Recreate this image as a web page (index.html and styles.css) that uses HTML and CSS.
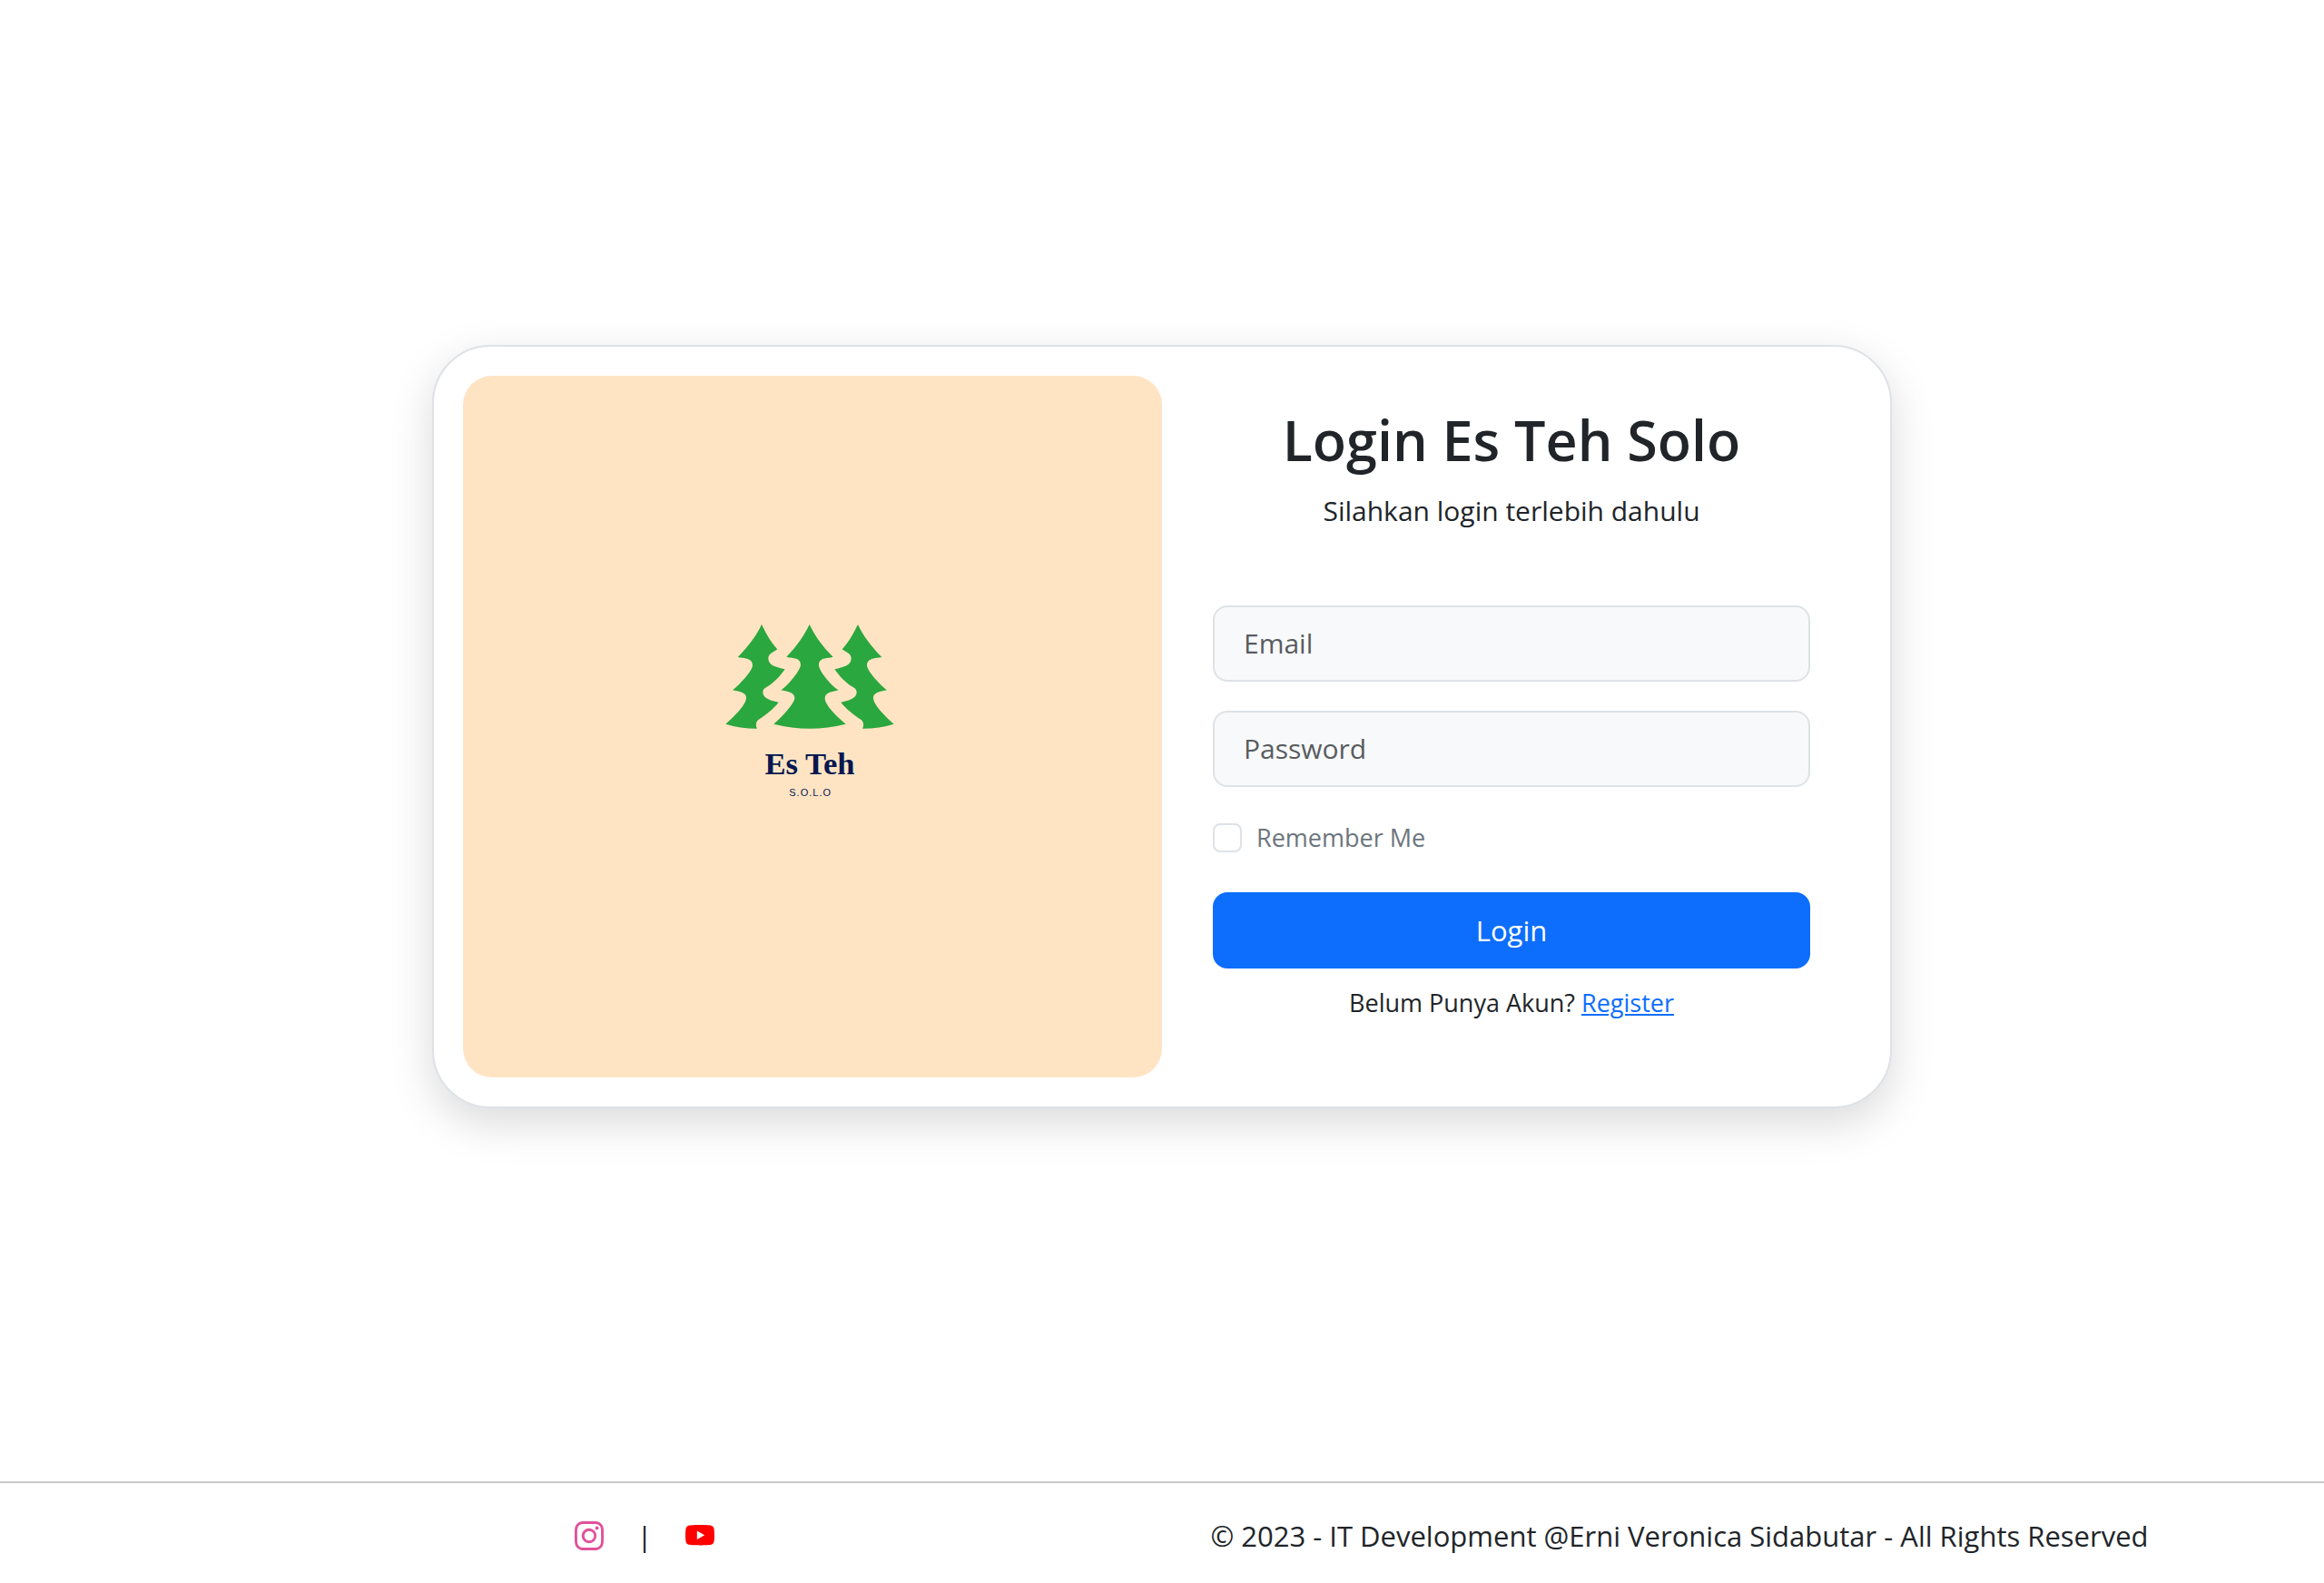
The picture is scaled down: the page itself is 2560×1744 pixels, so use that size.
FILE: index.html
```html
<!DOCTYPE html>
<html lang="id">
<head>
  <meta charset="utf-8">
  <meta name="viewport" content="width=device-width, initial-scale=1">
  <title>Login Es Teh Solo</title>
  <link rel="stylesheet" href="styles.css">
</head>
<body>
  <main class="page">
    <section class="card">
      <div class="brand">
        <svg class="logo" viewBox="0 0 690 660" role="img" aria-label="Es Teh Solo">
          <defs>
            <path id="side-tree" d="M177 54C190 80 205 110 229 136C215 147 200 148 199 166C199 190 225 195 254 202C240 222 220 245 198 258C187 264 181 268 181 279C183 300 210 306 233 311C215 335 190 352 165 370C157 378 157 390 162 398Q105 398 58 383C90 355 126 318 126 297C126 278 105 276 81 271C112 245 147 205 147 188C147 165 120 166 98 162C135 125 160 90 177 54Z"/>
          </defs>
          <g class="logo-trees">
            <use href="#side-tree"/>
            <path d="M335 54C350 85 375 125 413 161C400 167 366 160 366 188C366 205 400 250 431 271C405 278 386 278 386 300C388 320 420 355 455 383Q335 413 217 383C250 355 284 315 286 298C286 278 265 276 241 271C270 250 304 205 306 188C306 160 275 167 259 161C295 125 320 85 335 54Z"/>
            <use href="#side-tree" transform="translate(672 0) scale(-1 1)"/>
          </g>
          <text class="logo-name" x="336" y="548">Es Teh</text>
          <text class="logo-sub" x="338" y="620">S.O.L.O</text>
        </svg>
      </div>
      <div class="panel">
        <header class="heading">
          <h1 class="title">Login Es Teh Solo</h1>
          <p class="subtitle">Silahkan login terlebih dahulu</p>
        </header>
        <form class="form">
          <input class="field" type="email" placeholder="Email" aria-label="Email">
          <input class="field" type="password" placeholder="Password" aria-label="Password">
          <div class="remember">
            <input class="check" type="checkbox" id="remember">
            <label for="remember">Remember Me</label>
          </div>
          <button class="submit" type="submit">Login</button>
        </form>
        <p class="signup">Belum Punya Akun? <a href="#">Register</a></p>
      </div>
    </section>
  </main>
  <footer class="footer">
    <div class="footer-row">
      <div class="social">
        <a class="instagram" href="#" aria-label="Instagram">
          <svg viewBox="0 0 16 16"><path d="M8 0C5.829 0 5.556.01 4.703.048 3.85.088 3.269.222 2.76.42a3.917 3.917 0 0 0-1.417.923A3.927 3.927 0 0 0 .42 2.76C.222 3.268.087 3.85.048 4.7.01 5.555 0 5.827 0 8.001c0 2.172.01 2.444.048 3.297.04.852.174 1.433.372 1.942.205.526.478.972.923 1.417.444.445.89.719 1.416.923.51.198 1.09.333 1.942.372C5.555 15.99 5.827 16 8 16s2.444-.01 3.298-.048c.851-.04 1.434-.174 1.943-.372a3.916 3.916 0 0 0 1.416-.923c.445-.445.718-.891.923-1.417.197-.509.332-1.09.372-1.942C15.99 10.445 16 10.173 16 8s-.01-2.445-.048-3.299c-.04-.851-.175-1.433-.372-1.941a3.926 3.926 0 0 0-.923-1.417A3.911 3.911 0 0 0 13.24.42c-.51-.198-1.092-.333-1.943-.372C10.443.01 10.172 0 7.998 0h.003zm-.717 1.442h.718c2.136 0 2.389.007 3.232.046.78.035 1.204.166 1.486.275.373.145.64.319.92.599.28.28.453.546.598.92.11.281.24.705.275 1.485.039.843.047 1.096.047 3.231s-.008 2.389-.047 3.232c-.035.78-.166 1.203-.275 1.485a2.47 2.47 0 0 1-.599.919c-.28.28-.546.453-.92.598-.28.11-.704.24-1.485.276-.843.038-1.096.047-3.232.047s-2.39-.009-3.233-.047c-.78-.036-1.203-.166-1.485-.276a2.478 2.478 0 0 1-.92-.598 2.48 2.48 0 0 1-.6-.92c-.109-.281-.24-.705-.275-1.485-.038-.843-.046-1.096-.046-3.233 0-2.136.008-2.388.046-3.231.036-.78.166-1.204.276-1.486.145-.373.319-.64.599-.92.28-.28.546-.453.92-.598.282-.11.705-.24 1.485-.276.738-.034 1.024-.044 2.515-.045v.002zm4.988 1.328a.96.96 0 1 0 0 1.92.96.96 0 0 0 0-1.92zm-4.27 1.122a4.109 4.109 0 1 0 0 8.217 4.109 4.109 0 0 0 0-8.217zm0 1.441a2.667 2.667 0 1 1 0 5.334 2.667 2.667 0 0 1 0-5.334z"/></svg>
        </a>
        <span>|</span>
        <a class="youtube" href="#" aria-label="YouTube">
          <svg viewBox="0 0 16 16"><path d="M8.051 1.999h.089c.822.003 4.987.033 6.11.335a2.01 2.01 0 0 1 1.415 1.42c.101.38.172.883.22 1.402l.01.104.022.26.008.104c.065.914.073 1.77.074 1.957v.075c-.001.194-.01 1.108-.082 2.06l-.008.105-.009.104c-.05.572-.124 1.14-.235 1.558a2.007 2.007 0 0 1-1.415 1.42c-1.16.312-5.569.334-6.18.335h-.142c-.309 0-1.587-.006-2.927-.052l-.17-.006-.087-.004-.171-.007-.171-.007c-1.11-.049-2.167-.128-2.654-.26a2.007 2.007 0 0 1-1.415-1.419c-.111-.417-.185-.986-.235-1.558L.09 9.82l-.008-.104A31.4 31.4 0 0 1 0 7.68v-.123c.002-.215.01-.958.064-1.778l.007-.103.003-.052.008-.104.022-.26.01-.104c.048-.519.119-1.023.22-1.402a2.007 2.007 0 0 1 1.415-1.42c.487-.13 1.544-.21 2.654-.26l.17-.007.172-.006.086-.003.171-.007A99.788 99.788 0 0 1 7.858 2h.193zM6.4 5.209v4.818l4.157-2.408L6.4 5.209z"/></svg>
        </a>
      </div>
      <p class="copyright">© 2023 - IT Development @Erni Veronica Sidabutar - All Rights Reserved</p>
    </div>
  </footer>
</body>
</html>
```
FILE: styles.css
```css
* {
  box-sizing: border-box;
}

body {
  display: flex;
  flex-direction: column;
  min-height: 100vh;
  margin: 0;
  background: #fff;
  color: #212529;
  font: 400 31px/48px "Segoe UI", "Open Sans", "Noto Sans", sans-serif;
}

h1,
p {
  margin: 0;
}

a {
  color: #0d6efd;
}

.page {
  display: flex;
  flex: 1;
  align-items: center;
  justify-content: center;
  padding: 32px 32px 64px;
}

.card {
  display: grid;
  grid-template-columns: 1fr 1fr;
  width: 100%;
  max-width: 1608px;
  padding: 32px;
  border: 2px solid #dee2e6;
  border-radius: 64px;
  background: #fff;
  box-shadow: 0 16px 48px rgba(0, 0, 0, 0.15);
}

.brand {
  display: flex;
  align-items: center;
  justify-content: center;
  padding-bottom: 40px;
  border-radius: 32px;
  background: #ffe4c4;
}

.logo {
  width: 230px;
  height: 220px;
}

.logo-trees {
  fill: #2aa73e;
}

.logo-name,
.logo-sub {
  fill: #06184f;
  text-anchor: middle;
}

.logo-name {
  font: 700 104px "Liberation Serif", serif;
}

.logo-sub {
  font: 400 33px "Liberation Sans", sans-serif;
  letter-spacing: 3px;
}

.panel {
  padding: 32px 56px 60px;
}

.heading {
  margin-bottom: 80px;
  text-align: center;
}

.title {
  margin-bottom: 16px;
  font-size: 61px;
  font-weight: 600;
  line-height: 77px;
}

.subtitle {
  font-size: 30px;
}

.form {
  display: flex;
  flex-direction: column;
  gap: 32px;
}

.field,
.submit {
  width: 100%;
  height: 84px;
  border-radius: 16px;
  font: inherit;
}

.field {
  padding: 16px 32px;
  border: 2px solid #dee2e6;
  background: #f8f9fa;
  color: #212529;
  font-size: 30px;
}

.field::placeholder {
  color: #595c5f;
  opacity: 1;
}

.remember {
  display: flex;
  align-items: center;
  gap: 16px;
  height: 48px;
  margin-bottom: 4px;
  color: #6c757d;
  font-size: 27px;
}

.check {
  width: 32px;
  height: 32px;
  margin: 0;
  border: 2px solid #dee2e6;
  border-radius: 8px;
  background: #fff;
  appearance: none;
}

.check:checked {
  border-color: #0d6efd;
  background: #0d6efd;
}

.submit {
  border: 0;
  background: #0d6efd;
  color: #fff;
  cursor: pointer;
}

.signup {
  margin-top: 16px;
  font-size: 27px;
  line-height: 44px;
  text-align: center;
}

.footer {
  padding: 34px 24px 28px;
  border-top: 2px solid #c8c9ca;
}

.footer-row {
  display: grid;
  grid-template-columns: 1fr 1fr;
  max-width: 2280px;
  margin: 0 auto;
  text-align: center;
}

.social {
  display: flex;
  align-items: center;
  justify-content: center;
  gap: 36px;
}

.social svg {
  display: block;
  width: 32px;
  height: 32px;
  fill: currentColor;
}

.instagram {
  color: #e1519b;
}

.youtube {
  color: #f00;
}
```
